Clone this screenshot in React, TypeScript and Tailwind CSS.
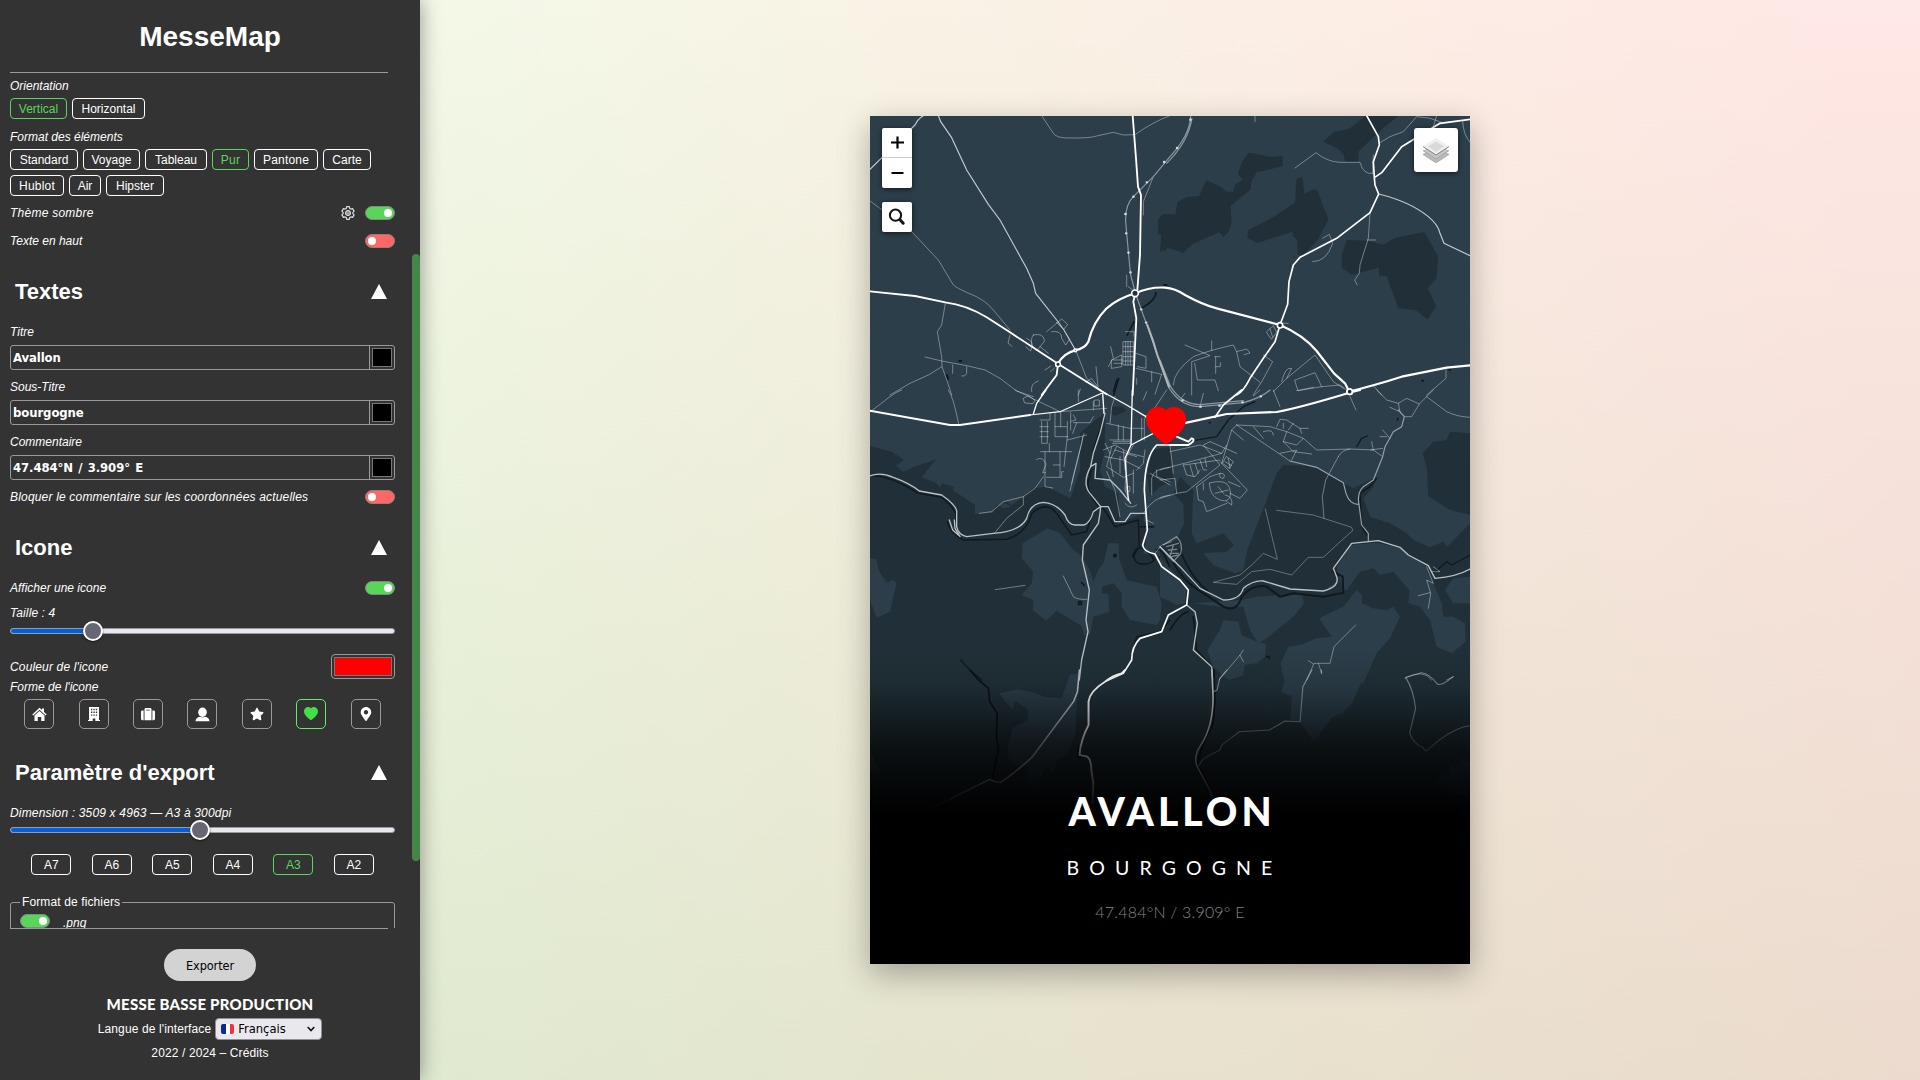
import type { ReactNode } from "react";
import { FaSuitcase, FaStar, FaMapMarkerAlt } from "react-icons/fa";
import { BsHeartFill } from "react-icons/bs";

function Label({ children, className = "" }: { children: ReactNode; className?: string }) {
  return <div className={"h-4 text-[12px] leading-4 italic whitespace-nowrap " + className}>{children}</div>;
}

function Chip({ children, active, className = "" }: { children: ReactNode; active?: boolean; className?: string }) {
  return (
    <button
      className={
        "h-[21px] rounded-[4px] border text-center text-[12px] leading-[20px] " +
        (active ? "border-[#5ad65c] text-[#5ad65c] " : "border-white text-white ") +
        className
      }
    >
      {children}
    </button>
  );
}

function Toggle({ on }: { on?: boolean }) {
  return (
    <span
      className={
        "flex h-[14px] w-[30px] shrink-0 items-center rounded-full border border-[#858585] px-[2px] " +
        (on ? "justify-end bg-[#57d65a]" : "justify-start bg-[#ff6764]")
      }
    >
      <span className="size-[8px] rounded-full bg-white" />
    </span>
  );
}

function Heading({ children, className = "" }: { children: ReactNode; className?: string }) {
  return (
    <div className={"flex h-7 items-center justify-between pr-2 pl-[5px] " + className}>
      <h2 className="pt-[2px] text-[22px] leading-7 font-bold">{children}</h2>
      <svg className="h-[15px] w-4" viewBox="0 0 16 15" fill="#fff">
        <path d="M8 0 16 15H0Z" />
      </svg>
    </div>
  );
}

function TextField({ label, value, className = "" }: { label: string; value: string; className?: string }) {
  return (
    <div className={className}>
      <Label>{label}</Label>
      <div className="mt-[5px] flex h-[25px] rounded-[3px] border border-[#999]">
        <div className="flex-1 pl-[2px] font-['DejaVu_Sans_Condensed','DejaVu_Sans'] text-[13px] leading-[23px] font-bold tracking-[-0.1px] [font-stretch:condensed] [word-spacing:1.3px]">
          {value}
        </div>
        <div className="w-[25px] border-l border-[#999] p-[2px]">
          <div className="h-[19px] w-[20px] border border-[#777] bg-black" />
        </div>
      </div>
    </div>
  );
}

function Slider({ value, className = "" }: { value: number; className?: string }) {
  return (
    <div className={"relative flex h-5 items-center " + className}>
      <div className="flex h-[6px] w-full overflow-hidden rounded-full border border-[#9a99a4] bg-[#e9e9ed]">
        <div className="-my-px -ml-px h-[6px] border border-[#2a74e6] bg-[#0060df]" style={{ width: value }} />
      </div>
      <div
        className="absolute top-0 size-5 rounded-full border-2 border-white bg-[#676774] shadow-[0_1px_2px_rgba(0,0,0,0.6)]"
        style={{ left: value - 10 }}
      />
    </div>
  );
}

function HomeIcon() {
  return (
    <svg width="15" height="15" viewBox="0 0 15 15" fill="#fff">
      <path d="M7.500 .8 10 3.100V1.500h2V5l2.700 2.500-1 1L7.500 2.800 1.300 8.500l-1-1Z" />
      <path d="M7.500 4 12.500 8.600V14H9.200V10H5.800V14H2.500V8.600Z" />
    </svg>
  );
}

function PersonIcon() {
  return (
    <svg width="15" height="15" viewBox="0 0 15 15" fill="#fff">
      <ellipse cx="7.500" cy="5.200" rx="4.300" ry="4.700" />
      <path d="M.5 14.200Q.8 10.200 5 9.700q2.500 1.200 5 0 4.200.5 4.500 4.500Z" />
    </svg>
  );
}

function BuildingIcon() {
  return (
    <svg width="14" height="14" viewBox="0 0 14 14" fill="#fff">
      <path
        fillRule="evenodd"
        d="M2 0h10v13h1v1H8.3v-2.6H5.7V14H1v-1h1V0Zm2 1.8v1.4h1.3V1.8H4Zm2.4 0v1.4h1.3V1.8H6.4Zm2.4 0v1.4h1.3V1.8H8.8ZM4 4.6V6h1.3V4.6H4Zm2.4 0V6h1.3V4.6H6.4Zm2.4 0V6h1.3V4.6H8.8ZM4 7.4v1.4h1.3V7.4H4Zm2.4 0v1.4h1.3V7.4H6.4Zm2.4 0v1.4h1.3V7.4H8.8Z"
      />
    </svg>
  );
}

function GearIcon() {
  return (
    <svg width="14" height="14" viewBox="0 0 14 14" fill="none" stroke="#ddd">
      <path
        strokeWidth="1.2"
        strokeLinejoin="round"
        d="M5.7.7h2.6l.4 1.7 1.2.7 1.7-.5 1.5 2.5-1.2 1.2v1.4l1.2 1.2-1.5 2.5-1.7-.5-1.2.7-.4 1.7H5.7l-.4-1.7-1.2-.7-1.7.5L.9 8.9l1.2-1.2V6.3L.9 5.1l1.5-2.5 1.7.5 1.2-.7Z"
      />
      <circle cx="7" cy="7" r="2.6" fill="#999" strokeWidth="1" />
    </svg>
  );
}

const shapes = [
  <HomeIcon key="home" />,
  <BuildingIcon key="building" />,
  <FaSuitcase key="case" size={14} />,
  <PersonIcon key="person" />,
  <FaStar key="star" size={14} />,
  <BsHeartFill key="heart" size={14} />,
  <FaMapMarkerAlt key="pin" size={14} />,
];

function Sidebar() {
  return (
    <aside className="relative z-10 flex h-[1080px] w-[420px] shrink-0 flex-col bg-[#333] text-white shadow-[0_0_20px_rgba(0,0,0,0.4)]">
      <header className="h-[73px]">
        <h1 className="h-[72px] pt-[19px] text-center text-[28px] leading-9 font-bold">MesseMap</h1>
        <div className="ml-[10px] h-px w-[378px] bg-[#999]" />
      </header>

      <div className="flex h-[855px] overflow-hidden">
        <div className="ml-[10px] w-[385px] shrink-0 pt-[5px]">
          <Label>Orientation</Label>
          <div className="mt-1 flex gap-[5px]">
            <Chip active className="w-[57px]">Vertical</Chip>
            <Chip className="w-[73px]">Horizontal</Chip>
          </div>
          <Label className="mt-[10px]">Format des éléments</Label>
          <div className="mt-1 flex flex-wrap gap-[5px]">
            <Chip className="w-[68px]">Standard</Chip>
            <Chip className="w-[57px]">Voyage</Chip>
            <Chip className="w-[62px]">Tableau</Chip>
            <Chip active className="w-[37px] tracking-[0.3px]">Pur</Chip>
            <Chip className="w-[64px] tracking-[0.2px]">Pantone</Chip>
            <Chip className="w-[48px]">Carte</Chip>
            <Chip className="w-[54px] tracking-[0.2px]">Hublot</Chip>
            <Chip className="w-[32px]">Air</Chip>
            <Chip className="w-[58px]">Hipster</Chip>
          </div>
          <div className="mt-[9px] flex h-4 items-center justify-between">
            <Label className="tracking-[0.25px]">Thème sombre</Label>
            <div className="flex items-center gap-[10px]">
              <GearIcon />
              <Toggle on />
            </div>
          </div>
          <div className="mt-3 flex h-4 items-center justify-between">
            <Label>Texte en haut</Label>
            <Toggle />
          </div>

          <Heading className="mt-7">Textes</Heading>
          <TextField className="mt-[19px]" label="Titre" value="Avallon" />
          <TextField className="mt-[9px]" label="Sous-Titre" value="bourgogne" />
          <TextField className="mt-[9px]" label="Commentaire" value="47.484°N / 3.909° E" />
          <div className="mt-[9px] flex h-4 items-center justify-between">
            <Label className="tracking-[0.18px]">Bloquer le commentaire sur les coordonnées actuelles</Label>
            <Toggle />
          </div>

          <Heading className="mt-7">Icone</Heading>
          <div className="mt-[19px] flex h-4 items-center justify-between">
            <Label>Afficher une icone</Label>
            <Toggle on />
          </div>
          <Label className="mt-[9px] tracking-[0.1px]">Taille : 4</Label>
          <Slider value={83} />
          <div className="mt-[13px] flex h-[25px] items-center justify-between">
            <Label className="tracking-[0.15px]">Couleur de l'icone</Label>
            <div className="h-[25px] w-[64px] rounded-[4px] border border-[#999] p-[2px]">
              <div className="h-full border border-[#777] bg-[#f00]" />
            </div>
          </div>
          <Label>Forme de l'icone</Label>
          <div className="mt-1 flex justify-around px-[2px]">
            {shapes.map((icon, i) => (
              <button
                key={i}
                className={
                  "flex size-[30px] items-center justify-center rounded-[5px] border " +
                  (i === 5 ? "border-[#5ef060] text-[#45dd48]" : "border-[#999] text-white")
                }
              >
                {icon}
              </button>
            ))}
          </div>

          <Heading className="mt-[29px]">Paramètre d'export</Heading>
          <Label className="mt-[19px] tracking-[0.17px]">Dimension : 3509 x 4963 — A3 à 300dpi</Label>
          <Slider className="-mt-px" value={190} />
          <div className="mt-[14px] flex justify-around px-[11px]">
            {["A7", "A6", "A5", "A4", "A3", "A2"].map((size) => (
              <Chip key={size} active={size === "A3"} className="w-10">
                {size}
              </Chip>
            ))}
          </div>
          <fieldset className="mt-[19px] h-20 rounded-[3px] border border-[#999] px-[9px]">
            <legend className="h-4 px-[2px] text-[12px] leading-4 tracking-[0.12px]">Format de fichiers</legend>
            <div className="flex pt-1">
              <Toggle on />
              <Label className="mt-px ml-[13px]">.png</Label>
            </div>
          </fieldset>
        </div>
        <div className="mt-[181px] ml-[17px] h-[607px] w-2 rounded-full bg-[#458548]" />
      </div>

      <footer className="flex flex-col">
        <div className="ml-[10px] h-px w-[378px] bg-[#999]" />
        <button className="mt-5 h-8 w-[92px] self-center rounded-full bg-[#d3d3d3] pt-px font-['DejaVu_Sans_Condensed','DejaVu_Sans'] text-[12.6px] leading-8 tracking-[-0.1px] text-black [font-stretch:condensed]">
          Exporter
        </button>
        <div className="mt-[13px] h-5 text-center font-[Lato] text-[15px] leading-5 font-black tracking-[0.24px] whitespace-nowrap">
          MESSE BASSE PRODUCTION
        </div>
        <div className="mt-1 flex h-[22px] items-center justify-center gap-1 text-[12px]">
          <span className="tracking-[0.12px]">Langue de l'interface</span>
          <div className="flex h-[22px] w-[107px] items-center rounded-[4px] border border-[#8f8f9d] bg-[#e9e9ed] pr-[6px] pl-[5px] text-black">
            <span className="flex h-[10px] w-[13px] overflow-hidden rounded-[2px]">
              <span className="flex-1 bg-[#0a2a9c]" />
              <span className="flex-1 bg-white" />
              <span className="flex-1 bg-[#ef3340]" />
            </span>
            <span className="ml-1 font-['DejaVu_Sans_Condensed','DejaVu_Sans'] text-[12.8px] [font-stretch:condensed]">
              Français
            </span>
            <svg className="ml-auto" width="8" height="6" viewBox="0 0 8 6" fill="none" stroke="#111" strokeWidth="1.6">
              <path d="M.7 1 4 4.5 7.3 1" />
            </svg>
          </div>
        </div>
        <div className="mt-[5px] h-4 text-center text-[12px] leading-4 tracking-[0.12px]">2022 / 2024 – Crédits</div>
      </footer>
    </aside>
  );
}

function CityMap() {
  return (
    <svg className="block h-[848px] w-[600px]" viewBox="870 116 600 848" fill="none" strokeLinejoin="round" strokeLinecap="round">
      <defs>
        <linearGradient id="fade" x1="0" y1="0" x2="0" y2="1">
          <stop offset="0" stopColor="#000" stopOpacity="0" />
          <stop offset="0.22" stopColor="#000" stopOpacity="0.12" />
          <stop offset="0.6" stopColor="#000" stopOpacity="0.68" />
          <stop offset="1" stopColor="#000" />
        </linearGradient>
      </defs>
      <rect x="870" y="116" width="600" height="848" fill="#2c3e4a" />
      <rect x="870" y="640" width="600" height="324" fill="#213038" />

      {/* woods */}
      <g transform="translate(860 105) scale(.33333)" fill="#213038">
        <path d="M905 330l25-3v30l-12 82-8-6 5-45-10-10Z" />
        <g transform="translate(900 0)">
          <path d="M8 328h38l6-36 26-15 40-4 20-48 44 20 18 15h20l6-22 22-14-14-18 12-35 20-28 24 3 40 10 38-3v30l-60 15-18 4-16 28-2 24-60 48 3 52-10 28-15 14-12-14-80 35-28 26-45-14-25 12 4-52-10-2V345Z" />
          <path d="M408 225q12-14 20-5l5 46 32-15 10 10 15 45 16 36-32 62-45 48-16-3-2-45-12-10-2-14-105 34-30-14 2-24 80-42 62-42Z" />
          <path d="M490 110l32-30 45-8 52-42h100l-50 40-74 70v30h-40l-4-22-20-18Z" />
          <path d="M545 450l15-45 65 2 45 12 34-20 88-18 12 18 30 55-4 66-27 30 26 54-26 40-34-28-54-6-35-96-22-2-2-24-82 22-28-22Z" />
        </g>
        <g transform="translate(0 855)">
          <path d="M30 168 95 185 132 210 108 228 130 245 160 232 228 208 185 262 230 280 240 295 245 280 282 290 278 300 345 345 345 372 400 368 410 345 440 335 455 345 490 320 520 295 560 290 632 325 650 270 660 240 660 130 700 95 735 70 735 180 720 240 735 290 775 310 778 400 850 370 860 440 850 490 900 500 930 540 950 600 940 900 30 900Z" />
          <path d="M755 50 790 50 800 62 765 78 750 70ZM875 180 930 170 940 270 900 290 870 320 862 260Z" />
          <g transform="translate(900 0)">
            <path d="M0 440 50 420 72 345 40 310 60 260 100 300 95 430 110 460 190 430 222 465 200 485 130 490 160 525 225 550 250 540 262 480 320 330 350 250 370 225 460 228 550 280 580 295 650 260 640 290 610 325 630 380 690 400 740 430 760 450 810 472 850 455 862 470 930 400 930 375 870 360 805 318 800 230 788 190 820 155 860 150 870 125 930 130 930 900 0 900Z" />
          </g>
        </g>
      </g>

      {/* clearings */}
      <g transform="translate(860 390) scale(.33333)" fill="#2c3e4a">
        <path d="M488 460 562 415 600 430 640 480 668 500 692 545 700 575 715 540 730 520 745 460 775 460 778 510 800 570 840 580 890 590 905 640 900 690 890 705 810 690 785 650 785 610 760 580 727 590 725 610 745 612 748 665 700 680 690 735 672 735 665 708 590 662 558 692 518 660 520 630 485 615 515 580 520 545 485 505Z" />
        <path d="M30 505 50 508 55 540 80 578 100 570 110 578 90 665 50 683 30 630ZM410 345 425 335 455 350 430 355Z" />
        <path d="M865 350 930 330 970 350 972 400 950 450 880 470 865 430ZM905 550 930 560 980 600 960 640 915 605Z" />
        <g transform="translate(900 0)">
          <path d="M530 530 572 465 650 458 720 475 800 530 820 580 845 640 850 680 880 680 915 700 917 755 875 790 830 770 810 690 780 650 745 640 748 600 700 545 660 555 640 535 600 545 560 600 548 600Z" />
          <path d="M477 685 550 650 590 600 605 615 605 640 640 655 680 660 700 650 720 680 690 745 650 790 610 880 375 880 362 820 385 770 420 765 470 745 515 740Z" />
          <path d="M100 640 245 630 290 620 425 612 432 640 400 680 320 745 295 760 270 720 250 650 180 650Z" />
          <path d="M142 782 182 715 190 690 235 695 245 735 290 755 318 762 315 800 290 820 255 825 250 850 200 868 160 830Z" />
          <path d="M0 500 80 590 75 640 50 645 0 620ZM855 600 880 565 930 560 930 640 880 640ZM400 560 500 560 530 590 440 600 360 590Z" />
          <path d="M290 560 500 440 575 455 520 530 525 580 490 600 400 595Z" fill="#213038" />
        </g>
      </g>
      <g transform="translate(860 670) scale(.3954 .33333)" fill="#2c3e4a">
        <path d="M352 70 400 58 440 68 470 82 510 84 530 15 552 10 545 190 525 250 500 270 490 310 470 290 450 345 420 335 425 290 380 280 372 240 385 175 425 150 425 120 392 92 385 120Z" />
        <path d="M1065 0 1280 0 1245 100 1220 130 1195 140 1148 215 1112 155 1088 150 1092 80 1065 65 1075 30ZM910 0h60v15l-35 15ZM25 240l26 65-26 5ZM1455 330l35-20 0-30 15 15 20-30 20 15v100l-50-10-30-20Z" />
      </g>

      {/* rivers and paths in black */}
      <g transform="translate(860 390) scale(.33333)" stroke="#11191d" strokeWidth="6">
        <path d="M30 258Q90 255 175 310L245 322Q295 360 288 390M262 395Q270 430 310 450L440 448Q500 430 515 370 560 330 590 370L635 435 680 425 700 360 730 355 765 410 835 390 838 470Q820 485 818 500M730 90 700 180 690 260Q670 290 715 350M840 410h35M835 475q-25 30 0 45 30 8 48-10-30-45-48-35ZM888 480q20-10 40 50" strokeWidth="4.500" />
        <path d="M930 500Q960 560 1000 590L1090 650Q1130 670 1145 620 1180 580 1220 590L1260 620 1300 610 1390 620 1450 608 1448 560 1420 545" />
        <path d="M960 480Q990 560 1050 610M930 720Q960 670 985 665M1000 680 1010 780 1055 830 1058 870" strokeWidth="5" />
        <path d="M1000 152 1070 140 1105 90 1150 50 1185 35M1490 170 1505 145 1522 138M1550 265 1530 290 1500 310 1505 410 1520 435M1720 550 1760 515 1775 525 1830 496" strokeWidth="4" />
        <path d="M302 810 330 840 365 870M760 5 770-30M815 800 830 740 900 725 930 690" strokeWidth="4" />
        <path d="M665 578l8 8M656 635h8v8h-8ZM762 494h6v6h-6ZM875 410h6M1220 800h8v6M1612 90l2-4M1048 98h3" strokeWidth="5" />
      </g>
      <g transform="translate(860 105) scale(.33333)" stroke="#10171b" strokeWidth="5">
        <path d="M888 563q0 20-40 45M822 650l-20 40M776 820l-15 50" />
        <path d="M298 768h6M912 540h8M260 810l4 12M1686 827h3M1768 794h3" strokeWidth="6" />
      </g>
      <g transform="translate(860 670) scale(.3954 .33333)" stroke="#0c1114" strokeWidth="4">
        <path d="M278 0 300 30 325 55 328 95 347 130 345 200 350 240 335 325M895 0 898 90 893 160 867 225 853 280 887 355M560 262h-8v-30" />
      </g>

      {/* small streets */}
      <g transform="translate(860 105) scale(.33333)" stroke="#fff" strokeOpacity="0.4" strokeWidth="2.800">
        <path d="M545 32 580 85Q590 100 630 99 690 100 710 93L760 82 790 90 825 89Q880 50 930 32" />
        <path d="M30 288 155 380 235 465 280 540Q290 550 345 573 380 590 400 615L450 675" />
        <path d="M256 595 245 660 232 680 245 755 246 785 262 830 275 870M195 756 245 768 320 782 375 795 420 820 470 858 520 875M246 785 205 810 150 835 90 870M278 780v25M320 785v20q-5 10-15 8" />
        <path d="M880 215 850 290V330M800 510v35M805 545 818 555" />
        <path d="M520 690q30-8 34 18l-24 30-14-18q-5-20 4-30ZM500 700q25 10 12 38l-14-12M560 680l45-38 18 16-12 16-22-22M575 680q30-5 30 20l12 20 12-18M540 725l25 20M450 690l-6 24 12 10M555 795l18-12M572 800l12-12" />
        <path d="M790 710h30v70h-30ZM796 680h26v14M790 725h30M790 740h30M790 755h30M790 768h30M797 710v70M804 710v70M811 710v70M755 765l30-15v35l-30 5ZM745 785l12-22M752 725l8 35M760 765h28M762 775h25" />
        <path d="M828 745 858 755V790L832 785M828 790 905 808M875 800v30M830 820v18M708 785l6 60-20-25-16 12M648 738l32 82 60 50M515 860q-5-25 20-32M655 870l6-18M905 808l-20 60" />
        <path d="M975 720 1050 752 995 770V870M1050 752M940 840Q940 800 1000 755 1050 735 1120 720L1130 740 1140 785 1200 832M1055 708v28M1130 740l30-8 10 12-18 5M1004 775 1012 825H1065l10 32M1065 755h15M1067 755v50M1067 785h14v-12" />
        <path d="M1210 750 1238 770 1205 830 1180 870M1240 860 1280 820 1365 750 1420 830 1450 850M1305 825 1365 803 1385 845 1315 857ZM1385 845 1440 840 1460 855M1265 830q10-45 30-40l-15 30M1220 680l20-18 10 20-15 20ZM1230 672l8 24M1260 655h25" />
        <path d="M1305 189 1368 143Q1400 170 1440 172L1500 172Q1510 210 1538 205M1560 113 1590 95 1630 80 1670 35Q1710 35 1745 52M1538 205 1540 150M1730 32 1720 65M1808 48Q1810 90 1830 112M1185 32v18" />
        <path d="M1358 470Q1400 470 1418 415L1408 388 1388 400M1530 325 1525 400 1500 480 1498 505 1484 525 1492 540M1522 405h25" />
        <path d="M1758 795V820L1700 870M1540 842 1565 870" />
      </g>
      <g transform="translate(860 390) scale(.33333)" stroke="#fff" strokeOpacity="0.4" strokeWidth="2.800">
        <path d="M30 66 90 20Q110 5 125 0M265 0Q280 20 296 102M465 0 600 65 740 55M490 25l15-8 20 14-6 10-24-2ZM655 0v35" />
        <path d="M540 90H570V70M545 95V160H562V95M540 110h25M540 125h25M540 140h25M542 185H635M555 185V290L578 294M568 160V185M585 70V140H622M585 110H620M622 95V140M602 65V110M640 75l8 15-14 4M640 98H690L700 80M622 150 680 135M622 140 612 230M600 185V260M580 225h20M560 262h45V245h5M530 208q20-10 28 15l-10 25h8M650 98l-12 32M632 68v52M630 303 640 260 665 160 668 140M672 130 635 280" />
        <path d="M358 370 395 365 430 335 490 320 525 295 550 260M490 320V345L440 385 405 428M406 599 495 586M610 558 640 620Q655 630 680 628" />
        <path d="M740 100 810 115 850 115M750 150H815M775 105V150M790 110V150M750 100 755 50 765 20M845 85V150M853 85V150M730 180 765 165 810 190 850 200M735 200 790 210 840 235M755 170 740 230 790 262 820 250M770 170 750 210 760 260M790 180 795 240M820 165 800 200 795 300 810 335M820 240 820 310M855 180 850 220 830 240M800 290h10v14h-10ZM735 160 750 190M765 180 830 200M780 200V250M740 245 765 300 780 380M860 390l20 10M795 340q15 20 35 5M700 60V35M710 30h8v18h-16V32ZM760 155h50M757 160h55" />
        <path d="M880 60 920 0M850 30 860 5M875 315V265Q880 235 930 232M890 240v20l40 15M850 370Q880 320 930 315M885 490l20-25 30-10M870 250 930 285" />
        <g transform="translate(900 0)">
          <path d="M0 240 35 230 185 190 120 165 30 185M30 165 40 250M0 270 45 265 50 310 0 325M50 310 80 305 180 225 130 165 150 155 230 190M70 225 80 255 105 260 120 240M90 225 100 258M105 220 115 250M120 210 130 240 140 240M135 205 140 230M70 225 180 210M185 190 200 165M200 200l20 15-12 20-20-15ZM195 215l20 12M205 205l5 30M180 215 262 300 240 325 210 310M215 120 250 150M230 105 215 120 185 220" />
          <path d="M148 280Q150 320 180 330 210 340 212 310 210 270 170 275ZM110 290 115 330 130 335 140 365 165 355 200 340M110 290 150 260 180 250q20 0 10 15-15 0-10-15M130 280v20M165 310l40-10M200 335l15 10q5-25-20-30M205 275 240 290M175 290 190 310" />
          <path d="M230 105 330 110 380 125 430 145 470 180 570 177 640 180 668 200M230 105 390 213M280 110 310 145M310 125q30-10 30 10M350 110 360 88 380 90 420 115 425 130M380 125 370 155 400 185 455 192M370 155 410 165 430 145M360 190 410 180 395 210M420 115h25M400 100 385 120M370 100v15" />
          <path d="M340 0 360 50M120 50 130 10M60 30 75 10M280 18 300 0M570 20 588 60M410 2 460-8" />
          <path d="M535 200 497 270 487 320 492 385M570 177Q545 180 535 200" />
          <path d="M350 361 460 375 575 412 578 422 535 460 490 502 445 502 395 555 330 538 275 545 230 583 160 577 240 555 275 525 310 490 352 508 316 357" strokeOpacity="0.330" />
          <path d="M10 465 50 440Q70 460 62 490L40 515M20 470l35-10M25 480 50 478M30 490l25 0M40 465 30 500M0 470 40 515M35 500l20-5" strokeWidth="4" />
          <path d="M650 0 680 30 715 40 740 25 778 42 820 0M800 20 860 65Q890 80 930 82M735 80H755L778 42M690 52 720 65 715 40M668 120 690 145M660 140h20M635 155 640 180M632 180 668 175" />
          <path d="M800 530 820 580 800 570 812 610 805 655M775 617 810 608M820 530 840 545 815 545" />
          <path d="M177 870 240 795 250 815M240 795 250 780M440 870 462 820 510 820 522 770 587 705M445 812 460 822M475 820 485 850M735 865Q790 835 815 870M860 870 880 860" />
        </g>
      </g>
      <g transform="translate(860 670) scale(.3954 .33333)" stroke="#fff" strokeOpacity="0.42" strokeWidth="3">
        <path d="M928 0 910 25 903 60 893 66M1143 0 1120 50 1113 155 1075 153 1035 180 960 185 915 225 910 240 870 265 855 288M1167 0v10M1380 22 1420 8Q1440 10 1460 42 1470 50 1500 20M1380 22Q1400 60 1405 115L1390 190Q1400 220 1422 232L1432 243 1465 210Q1510 170 1543 167" />
        <path d="M230 387 150 432" />
      </g>

      {/* railway */}
      <g transform="translate(860 105) scale(.33333)" stroke="#8c979e" strokeWidth="3.500">
        <path d="M930 155 880 215 820 275Q795 300 797 350L805 440 812 510 825 560M930 155Q990 90 992 32M920 175Q985 110 996 40" />
        <path d="M828 570 858 653 875 700 890 745 925 845Q960 905 1020 905L1150 893Q1205 878 1230 855M900 765 932 845Q965 898 1020 899L1150 887" />
        <path d="M912 171h1M860 232h1M820 275h1M796 327h1M798 385h1M805 443h1M811 502h1M843 613h1M858 653h1M951 129h1M991 44h1M967 886h1M1021 905h1M1078 902h1M1147 892h1M1202 874h1" stroke="#d5dadd" strokeWidth="7" />
        <path d="M862 660 880 710 892 750 927 845" stroke="#b0b8bd" strokeWidth="6" />
      </g>

      {/* secondary roads */}
      <g transform="translate(860 105) scale(.33333)" stroke="#c3cace" strokeWidth="3.500">
        <path d="M235 32 242 50 275 98 320 195 385 298 420 345 500 490 520 535 527 565 590 645 612 675 648 738" />
        <path d="M30 193 165 60Q175 40 190 32M1556 267Q1650 290 1705 335 1735 360 1740 385L1752 415 1830 452" />
      </g>
      <g transform="translate(860 390) scale(.33333)" stroke="#b9c1c5" strokeWidth="4">
        <path d="M30 258Q60 245 100 262 150 280 178 303L245 315Q295 350 290 370L290 410Q295 435 320 440L400 430Q480 425 500 385 510 340 550 337 590 340 615 375 625 405 645 405H672Q690 400 700 365L722 350H745L765 395H795L812 370H855" />
        <path d="M735 70 720 130 700 190 692 230Q665 280 690 310L722 350 720 370 715 400 670 465 667 510 688 600 678 690 684 725 665 810 658 870M692 230 708 220 705 265 750 270 780 300 812 340M268 390 278 420 295 435M283 390 285 415 300 440" />
        <g transform="translate(900 0)">
          <path d="M470 232 550 278 558 310Q570 345 597 343M597 343 605 405 625 430V452M597 343Q590 310 610 290L640 270 668 200 675 170 700 125 725 110 733 80 715 60M390 213 470 232" stroke="#98a2a8" strokeWidth="3.500" />
          <path d="M0 470 60 530 120 595 190 630Q240 630 250 595 280 570 310 573L390 597 490 603Q540 590 530 560L520 535 575 460 655 452 720 472 745 495 805 527 825 565Q890 560 930 537M80 645 105 665 112 700 100 780 155 830 158 870" />
        </g>
      </g>
      <g transform="translate(860 670) scale(.3954 .33333)" stroke="#b9c1c5" strokeWidth="4">
        <path d="M555 0 550 65 540 95 480 190 435 262Q380 320 355 337 340 338 328 328L228 387" />
        <path d="M890 0 893 80Q893 170 862 225 842 260 853 290L885 360 900 420" />
      </g>

      {/* main roads */}
      <g transform="translate(860 105) scale(.33333)" stroke="#fff" strokeWidth="5.500">
        <path d="M30 559 165 573 256 592Q320 600 380 637L450 682 594 776" />
        <path d="M818 32 828 160 834 245 843 270 840 450 832 555M826 565 820 590 829 640 818 870" />
        <path d="M594 776Q610 745 645 736 675 730 685 710 700 650 740 610 775 580 826 565 870 545 915 548 945 550 975 570 1030 600 1070 610L1260 660" strokeWidth="6.500" />
        <path d="M594 776 740 868M594 776 590 810 545 870" />
        <path d="M1260 660Q1330 690 1370 738L1422 805 1455 835 1468 860Q1580 830 1625 815L1760 788 1830 781" strokeWidth="6.500" />
        <path d="M1260 660 1245 710 1210 760 1170 820Q1150 860 1130 870M1260 660 1283 598 1287 530 1300 480 1320 457 1430 400 1530 323 1556 267 1545 240 1543 218 1540 170 1558 120 1555 95 1520 32M1543 218 1565 203 1625 125 1740 55 1830 43" strokeWidth="5" />
        <g fill="#213038" strokeWidth="5">
          <circle cx="825" cy="565" r="10" />
          <circle cx="594" cy="778" r="7" />
          <circle cx="646" cy="736" r="4" />
          <circle cx="1260" cy="661" r="8" />
          <circle cx="1469" cy="860" r="8" />
        </g>
      </g>
      <g transform="translate(860 390) scale(.33333)" stroke="#fff" strokeWidth="5">
        <path d="M510 75 600 65 725 10" strokeWidth="3.500" />
        <path d="M30 62 270 105H300L510 75" strokeWidth="6" />
        <path d="M558 0 530 40 520 72M718 0 800 45 858 80M817 0 813 165 795 205 805 330M813 165 880 130M728 10 732 70" strokeWidth="4" />
        <path d="M858 80 970 100 1100 72 1250 66Q1330 50 1468 8L1500 0" strokeWidth="6.500" />
        <path d="M1065 82 1090 45 1145 0" />
        <path d="M930 165H890Q855 200 853 300L862 420 848 465Q850 485 885 492L905 530 960 570 985 600 980 645 925 675 905 725 840 745Q815 770 815 810L790 850 740 872" />
        <path d="M930 165H985Q1010 150 995 145L985 155 950 140" strokeWidth="6" />
        <circle cx="1469" cy="5" r="8" fill="#213038" />
      </g>
      <g transform="translate(860 670) scale(.3954 .33333)" stroke="#fff" strokeWidth="5">
        <path d="M670 0 662 10Q640 15 620 35 580 65 578 95V165Q558 210 555 255L575 260Q585 270 585 300L590 340 588 400" />
      </g>

      <rect x="870" y="650" width="600" height="165" fill="url(#fade)" />
      <rect x="870" y="814" width="600" height="150" fill="#000" />
    </svg>
  );
}

function LayersIcon() {
  return (
    <svg width="26" height="26" viewBox="0 0 26 26">
      <path d="M0 17.500 13 9l13 8.500L13 26Z" fill="#b9b9b9" stroke="#8c8c8c" strokeWidth="0.500" />
      <path d="M0 13.500 13 5l13 8.500L13 22Z" fill="#c6c6c6" stroke="#fff" strokeWidth="0.700" />
      <path d="M0 13.500 13 22l13-8.500" fill="none" stroke="#888" strokeWidth="0.800" />
      <path d="M0 9.500 13 1l13 8.500L13 18Z" fill="#efefef" />
      <path d="M5 9.500 13 4.500l8 5L13 15Z" fill="#d9d9d9" />
      <path d="M0 9.500 13 18l13-8.500" fill="none" stroke="#777" strokeWidth="0.900" />
    </svg>
  );
}

function Poster() {
  return (
    <div className="relative h-[848px] w-[600px] bg-black shadow-[0_10px_30px_rgba(0,0,0,0.3)]">
      <CityMap />
      <div className="absolute top-3 left-3 flex flex-col gap-[14px]">
        <div className="w-[30px] rounded-[2px] bg-white text-black shadow-[0_1px_5px_rgba(0,0,0,0.65)]">
          <div className="flex h-[30px] items-center justify-center border-b border-[#ccc]">
            <svg width="13" height="13" viewBox="0 0 13 13" stroke="#000" strokeWidth="2.200">
              <path d="M6.500 .5v12M0 6.500h13" />
            </svg>
          </div>
          <div className="flex h-[30px] items-center justify-center">
            <svg width="13" height="13" viewBox="0 0 13 13" stroke="#000" strokeWidth="2">
              <path d="M.5 6h12" />
            </svg>
          </div>
        </div>
        <div className="flex size-[30px] items-center justify-center rounded-[2px] bg-white shadow-[0_1px_5px_rgba(0,0,0,0.65)]">
          <svg width="18" height="18" viewBox="0 0 18 18" fill="none" stroke="#111" strokeLinecap="round">
            <circle cx="7.500" cy="7.200" r="5.600" strokeWidth="2" />
            <path d="M12 11.800 15.200 15.200" strokeWidth="3" />
          </svg>
        </div>
      </div>
      <div className="absolute top-3 right-3 flex size-11 items-center justify-center rounded-[3px] bg-white shadow-[0_1px_5px_rgba(0,0,0,0.65)]">
        <LayersIcon />
      </div>
      <BsHeartFill className="absolute top-[291px] left-[276px] size-10 text-[#f00]" />
      <div className="absolute inset-x-0 top-[671px] flex flex-col items-center whitespace-nowrap text-white">
        <div className="h-12 pl-1 font-[Lato] text-[39px] leading-[48px] font-black tracking-[4px]">AVALLON</div>
        <div className="mt-[21px] h-6 pl-[9px] font-[Lato] text-[19.5px] leading-6 tracking-[10.1px]">BOURGOGNE</div>
        <div className="mt-[22px] h-5 font-[Lato] text-[16px] leading-5 font-light tracking-[0.2px] text-[#858585]">
          47.484°N / 3.909° E
        </div>
      </div>
    </div>
  );
}

export default function App() {
  return (
    <div className="flex h-[1080px] w-[1920px] overflow-hidden bg-[linear-gradient(to_bottom,rgba(120,130,60,0)_0%,rgba(120,130,60,0.14)_100%),linear-gradient(80deg,#f1fbe8_20%,#faf1e5_58%,#ffe8e5_95%)] font-['Liberation_Sans',Arial,sans-serif]">
      <Sidebar />
      <main className="flex flex-1 items-center justify-center">
        <Poster />
      </main>
    </div>
  );
}
